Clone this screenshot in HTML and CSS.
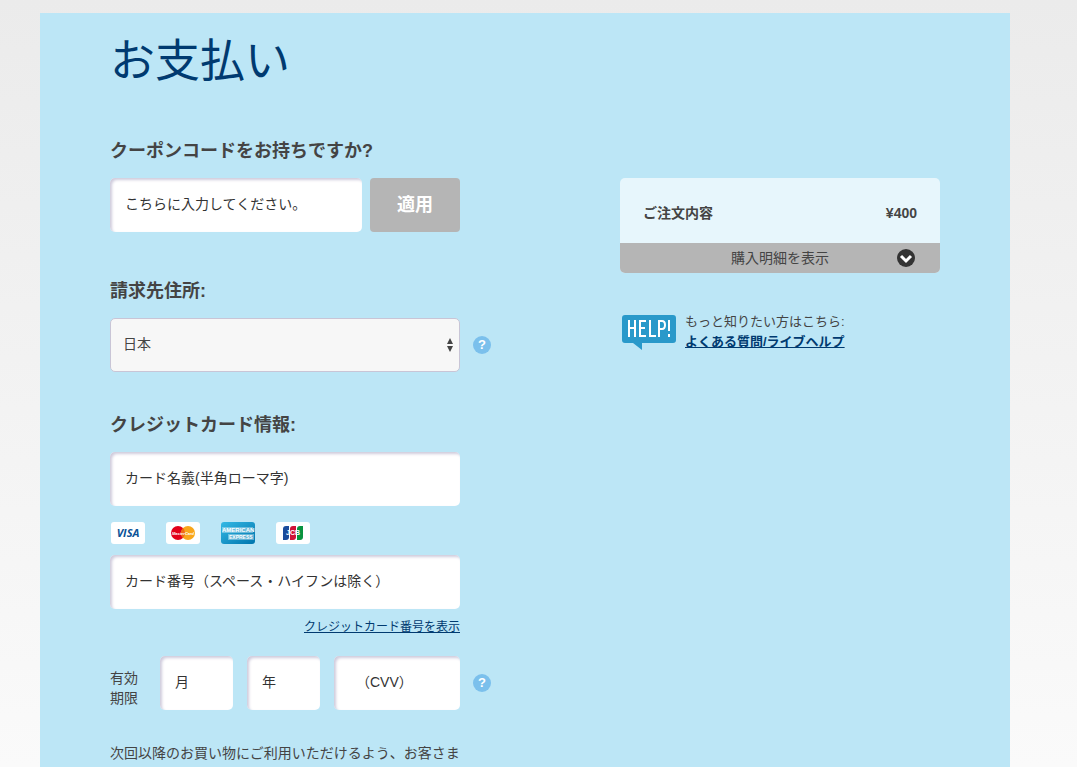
FILE: index.html
```html
<!DOCTYPE html>
<html lang="ja">
<head>
<meta charset="utf-8">
<meta name="viewport" content="width=device-width, initial-scale=1">
<title>お支払い</title>
<link rel="stylesheet" href="styles.css">
</head>
<body>
<main class="panel">
  <h1 class="title">お支払い</h1>
  <div class="columns">
    <form class="payment">
      <section class="section">
        <h2 class="heading"><label for="coupon">クーポンコードをお持ちですか?</label></h2>
        <div class="row coupon">
          <input class="field" id="coupon" type="text" placeholder="こちらに入力してください。">
          <button class="apply" type="button">適用</button>
        </div>
      </section>
      <section class="section address">
        <h2 class="heading"><label for="country">請求先住所:</label></h2>
        <div class="row with-help">
          <div class="select-wrap">
            <select class="select" id="country"><option>日本</option></select>
            <svg class="select-arrows" width="8" height="14" viewBox="0 0 8 14" aria-hidden="true"><path d="M4 0 7 6H1zM4 14 1 8h6z" fill="#444"/></svg>
          </div>
          <button class="help" type="button" aria-label="請求先住所について">?</button>
        </div>
      </section>
      <section class="section card-info">
        <h2 class="heading">クレジットカード情報:</h2>
        <input class="field" type="text" aria-label="カード名義" placeholder="カード名義(半角ローマ字)">
        <div class="cards">
          <svg class="card" viewBox="0 0 34 22" role="img" aria-label="VISA">
            <rect width="34" height="22" rx="3" fill="#fff"/>
            <text x="17" y="15" class="visa" text-anchor="middle">VISA</text>
          </svg>
          <svg class="card" viewBox="0 0 34 22" role="img" aria-label="MasterCard">
            <rect width="34" height="22" rx="3" fill="#fff"/>
            <circle cx="12" cy="11" r="7" fill="#e2001a"/>
            <circle cx="22" cy="11" r="7" fill="#f9a61a"/>
            <path d="M17 6.1a7 7 0 0 1 0 9.8a7 7 0 0 1 0-9.8" fill="#ef6a16"/>
            <text x="17" y="13" class="master" text-anchor="middle">MasterCard</text>
          </svg>
          <svg class="card" viewBox="0 0 34 22" role="img" aria-label="American Express">
            <defs><linearGradient id="amex" x1="0" y1="0" x2="1" y2="1"><stop offset="0" stop-color="#35b9e5"/><stop offset="1" stop-color="#0075ad"/></linearGradient></defs>
            <rect width="34" height="22" rx="3" fill="url(#amex)"/>
            <path d="M1 5h31v6H1zM7 12h26v6H7z" fill="#fff" opacity=".35"/>
            <text x="1" y="10" class="amex">AMERICAN</text>
            <text x="8" y="17" class="amex express">EXPRESS</text>
          </svg>
          <svg class="card" viewBox="0 0 34 22" role="img" aria-label="JCB">
            <rect width="34" height="22" rx="3" fill="#fff"/>
            <path d="M10 4h3v11a3 3 0 0 1-3 3H7V7a3 3 0 0 1 3-3z" fill="#1a4c9c"/>
            <path d="M17 4h3v11a3 3 0 0 1-3 3h-3V7a3 3 0 0 1 3-3z" fill="#cf1237"/>
            <path d="M24 4h3v11a3 3 0 0 1-3 3h-3V7a3 3 0 0 1 3-3z" fill="#08933f"/>
            <text x="17" y="13" class="jcb" text-anchor="middle">JCB</text>
          </svg>
        </div>
        <input class="field" type="text" aria-label="カード番号" placeholder="カード番号（スペース・ハイフンは除く）">
        <a class="show-number" href="#">クレジットカード番号を表示</a>
        <div class="row with-help expiry">
          <div class="expiry-fields">
            <span class="expiry-label">有効<br>期限</span>
            <input class="field" type="text" aria-label="有効期限 月" placeholder="月">
            <input class="field" type="text" aria-label="有効期限 年" placeholder="年">
            <input class="field" type="text" aria-label="CVV" placeholder="　（CVV）">
          </div>
          <button class="help" type="button" aria-label="CVVについて">?</button>
        </div>
        <p class="note">次回以降のお買い物にご利用いただけるよう、お客さま</p>
      </section>
    </form>
    <aside class="side">
      <section class="order">
        <div class="order-total"><span>ご注文内容</span><span>¥400</span></div>
        <button class="order-toggle" type="button">
          <span>購入明細を表示</span>
          <svg class="order-icon" width="18" height="18" viewBox="0 0 18 18" aria-hidden="true"><circle cx="9" cy="9" r="9" fill="#333"/><path d="m4 7 5 5 5-5" fill="none" stroke="#fff" stroke-width="3"/></svg>
        </button>
      </section>
      <div class="support">
        <svg class="support-icon" width="54" height="36" viewBox="0 0 54 36" role="img" aria-label="HELP!">
          <path d="M3 0h48a3 3 0 0 1 3 3v22a3 3 0 0 1-3 3H20v7l-9-7H3a3 3 0 0 1-3-3V3a3 3 0 0 1 3-3z" fill="#2999ca"/>
          <g fill="none" stroke="#fff" stroke-width="2">
            <path d="M7 5v17M13 5v17M7 13h6M24 6h-6v15h6M18 13h5M28 5v16h6M37 22V6h3q3 0 3 4t-3 4h-3M47 5v11M47 19v3"/>
          </g>
        </svg>
        <div class="support-text">もっと知りたい方はこちら:<br><a href="#">よくある質問/ライブヘルプ</a></div>
      </div>
    </aside>
  </div>
</main>
</body>
</html>
```
FILE: styles.css
```css
* { box-sizing: border-box; }

body {
  margin: 0;
  min-height: 100vh;
  padding: 13px 67px 0 40px;
  background: linear-gradient(#ebebeb, #fafafa);
  color: #444;
  font: 14px/20px "Liberation Sans", "Noto Sans CJK JP", sans-serif;
}

button, input, select { font: inherit; color: inherit; margin: 0; }

a { color: #003a70; }

.panel {
  min-height: calc(100vh - 13px);
  padding: 18px 70px 0;
  background: #bce6f6;
}

.title {
  margin: 0 0 46px;
  color: #003a70;
  font-size: 45px;
  line-height: 62px;
  font-weight: 400;
}

.columns {
  display: flex;
  justify-content: space-between;
  gap: 40px;
}

.payment { flex: 0 1 382px; }

.section { width: 100%; max-width: 350px; margin-bottom: 47px; }
.address { margin-bottom: 41px; }
.card-info { margin-bottom: 0; }

.heading {
  margin: 0 0 15px;
  font-size: 18px;
  line-height: 24px;
  font-weight: 700;
}

.row { display: flex; align-items: center; }
.coupon { gap: 8px; }
.with-help { gap: 13px; margin-right: -31px; }

.field {
  display: block;
  width: 100%;
  min-width: 0;
  height: 54px;
  padding: 0 15px 2px;
  border: 0;
  border-radius: 5px;
  background: #fff;
  box-shadow: inset 2px 2px 3px #cfcbdc;
}

.field::placeholder { color: #333; opacity: 1; }

.apply {
  flex: 0 0 90px;
  height: 54px;
  padding: 0;
  border: 0;
  border-radius: 4px;
  background: #b5b5b5;
  color: #fff;
  font-size: 18px;
  font-weight: 700;
}

.select-wrap { position: relative; flex: 1; }

.select {
  display: block;
  width: 100%;
  height: 54px;
  padding: 0 12px 2px;
  border: 1px solid #c9c5d6;
  border-radius: 5px;
  background: #f7f7f7;
  appearance: none;
}

.select-arrows {
  position: absolute;
  right: 6px;
  top: 20px;
  pointer-events: none;
}

.help {
  flex: 0 0 18px;
  height: 18px;
  padding: 0;
  border: 0;
  border-radius: 50%;
  background: #7bc0ec;
  color: #fff;
  font-size: 13px;
  line-height: 18px;
  font-weight: 700;
}

.cards {
  display: flex;
  gap: 21px;
  padding: 16px 1px 11px;
}

.card { display: block; width: 34px; height: 22px; }
.visa { font: italic 700 11px "Open Sans", sans-serif; fill: #0a5297; }
.master { font: italic 700 4px "Liberation Sans", sans-serif; fill: #fff; }
.amex { font: 700 6px "Liberation Sans", sans-serif; fill: #fff; }
.express { font-size: 5px; }
.jcb { font: 700 7px "Liberation Sans", sans-serif; fill: #fff; }

.show-number {
  display: block;
  width: fit-content;
  margin: 8px 0 19px auto;
  font-size: 12px;
}

.expiry-fields {
  display: grid;
  flex: 1;
  grid-template-columns: 36px 73fr 73fr 126fr;
  gap: 14px;
  align-items: center;
}

.expiry-label { padding-top: 10px; }

.note { margin: 33px 0 0; white-space: nowrap; }

.side { flex: 0 1 320px; padding-top: 39px; }

.order { overflow: hidden; border-radius: 5px; background: #e7f6fc; }

.order-total {
  display: flex;
  justify-content: space-between;
  padding: 25px 23px 20px;
  font-weight: 700;
}

.order-toggle {
  display: grid;
  grid-template-columns: 1fr auto 1fr;
  align-items: center;
  width: 100%;
  height: 30px;
  padding: 0 25px;
  border: 0;
  background: #b5b5b5;
}

.order-toggle span { grid-column: 2; }
.order-icon { justify-self: end; }

.support {
  display: flex;
  gap: 9px;
  margin: 39px 2px 0;
}

.support-icon { flex: none; margin-top: 3px; }
.support-text { font-size: 13px; }
.support-text a { font-weight: 700; }
```
